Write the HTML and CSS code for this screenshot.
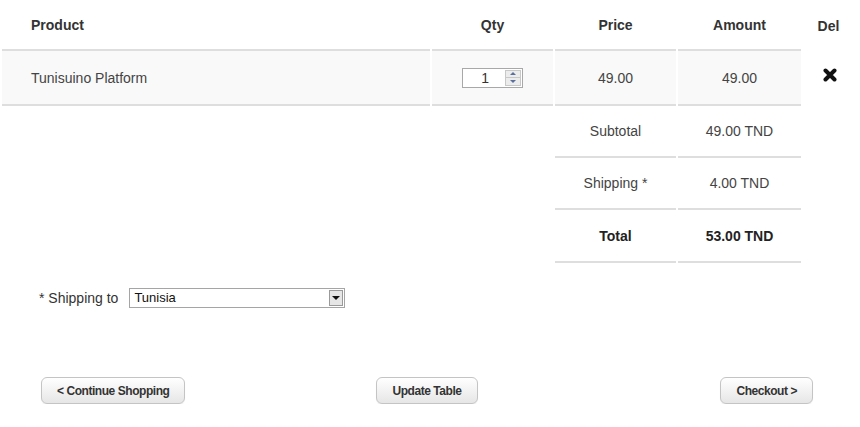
FILE: index.html
```html
<!DOCTYPE html>
<html>
<head>
<meta charset="utf-8">
<link rel="stylesheet" href="styles.css">
</head>
<body>
<table class="cart">
  <colgroup>
    <col class="w-product"><col class="w-qty"><col class="w-price"><col class="w-amount"><col class="w-del">
  </colgroup>
  <thead>
    <tr>
      <th class="c-product">Product</th>
      <th>Qty</th>
      <th>Price</th>
      <th>Amount</th>
      <th class="c-del">Del</th>
    </tr>
  </thead>
  <tbody>
    <tr class="item">
      <td class="c-product">Tunisuino Platform</td>
      <td>
        <div class="qty">
          <span class="qty-val">1</span>
          <span class="spin">
            <span class="spin-btn"><span class="tri-up"></span></span>
            <span class="spin-btn"><span class="tri-down"></span></span>
          </span>
        </div>
      </td>
      <td>49.00</td>
      <td>49.00</td>
      <td class="del">
        <svg width="14" height="14" viewBox="0 0 14 14"><path d="M2.5 2.5 L11.5 11.5 M11.5 2.5 L2.5 11.5" stroke="#111" stroke-width="4" stroke-linecap="round"/></svg>
      </td>
    </tr>
    <tr class="sum">
      <td colspan="2" class="blank"></td>
      <td>Subtotal</td>
      <td>49.00 TND</td>
      <td class="blank"></td>
    </tr>
    <tr class="sum">
      <td colspan="2" class="blank"></td>
      <td>Shipping *</td>
      <td>4.00 TND</td>
      <td class="blank"></td>
    </tr>
    <tr class="sum total">
      <td colspan="2" class="blank"></td>
      <td>Total</td>
      <td>53.00 TND</td>
      <td class="blank"></td>
    </tr>
  </tbody>
</table>

<div class="shipping">
  <span class="ship-label">* Shipping to</span>
  <div class="select">
    <span class="select-val">Tunisia</span>
    <span class="select-btn"><span class="tri-down dark"></span></span>
  </div>
</div>

<div class="actions">
  <button class="btn left">&lt; Continue Shopping</button>
  <button class="btn mid">Update Table</button>
  <button class="btn right">Checkout &gt;</button>
</div>
</body>
</html>
```

FILE: styles.css
```css
html, body {
  margin: 0;
  padding: 0;
  background: #fff;
}
body {
  font-family: "Liberation Sans", Arial, sans-serif;
  font-size: 14px;
  color: #444;
}
.cart {
  width: 860px;
  table-layout: fixed;
  border-collapse: separate;
  border-spacing: 2px 0;
}
.w-product { width: 428px; }
.w-qty { width: 121px; }
.w-price { width: 121px; }
.w-amount { width: 123px; }
.w-del { width: 55px; }

.cart th {
  height: 47px;
  padding: 0;
  font-weight: bold;
  color: #333;
  text-align: center;
  vertical-align: middle;
}
.cart th.c-product { text-align: left; padding-left: 29px; }
.cart th.c-del { padding-top: 2px; padding-right: 4px; }

.cart td {
  padding: 0;
  text-align: center;
  vertical-align: middle;
}
.item td {
  height: 53px;
  background: #f9f9f9;
  border-top: 2px solid #dedede;
  border-bottom: 2px solid #dedede;
}
.item td.c-product { text-align: left; padding-left: 29px; }
.item td.del {
  background: transparent;
  border: none;
  padding-top: 2px;
}
.item td.del svg { display: block; margin: 0 auto; position: relative; left: -1px; top: -4px; }

.sum td {
  height: 50px;
  border-bottom: 2px solid #dedede;
}
.sum.total td { height: 51px; }
.sum td.blank { border: none; }
.total td { font-weight: bold; color: #222; }

.qty {
  display: inline-flex;
  align-items: center;
  width: 61px;
  height: 20px;
  box-sizing: border-box;
  border: 1px solid #a8a8a8;
  background: #fff;
  vertical-align: middle;
}
.qty-val {
  flex: 1;
  text-align: right;
  padding-right: 16px;
  font-size: 14px;
  color: #333;
  line-height: 18px;
}
.spin {
  display: flex;
  flex-direction: column;
  width: 16px;
  height: 16px;
  margin-right: 1px;
}
.spin-btn {
  flex: 1;
  display: flex;
  align-items: center;
  justify-content: center;
  background: #ececec;
  border: 1px solid #c8c8c8;
}
.spin-btn + .spin-btn { border-top: none; }
.tri-up, .tri-down {
  width: 0; height: 0;
  border-left: 3px solid transparent;
  border-right: 3px solid transparent;
}
.tri-up { border-bottom: 3px solid #5a6f9a; }
.tri-down { border-top: 3px solid #5a6f9a; }
.tri-down.dark {
  border-left-width: 4px;
  border-right-width: 4px;
  border-top: 4px solid #111;
}

.shipping {
  display: flex;
  align-items: center;
  margin-top: 24px;
  padding-left: 39px;
  height: 21px;
}
.ship-label { color: #333; margin-right: 11px; }
.select {
  display: flex;
  align-items: center;
  width: 216px;
  height: 20px;
  box-sizing: border-box;
  border: 1px solid #a5a5a5;
  background: #fff;
}
.select-val {
  flex: 1;
  padding-left: 4px;
  font-size: 13px;
  color: #111;
}
.select-btn {
  width: 14px;
  height: 16px;
  margin-right: 1px;
  box-sizing: border-box;
  border: 1px solid #9a9a9a;
  background: #e6e6e6;
  display: flex;
  align-items: center;
  justify-content: center;
}

.actions {
  display: grid;
  grid-template-columns: 1fr auto 1fr;
  align-items: center;
  margin-top: 69px;
  padding-left: 41px;
  padding-right: 47px;
}
.btn {
  height: 27px;
  padding: 0 15px;
  font-family: "Liberation Sans", Arial, sans-serif;
  font-size: 12px;
  letter-spacing: -0.45px;
  font-weight: bold;
  color: #333;
  background: linear-gradient(#ffffff, #e6e6e6);
  border: 1px solid #c4c4c4;
  border-radius: 6px;
  box-shadow: 0 1px 1px rgba(0,0,0,0.06);
}
.btn.left { justify-self: start; }
.btn.mid { justify-self: center; }
.btn.right { justify-self: end; }
```
